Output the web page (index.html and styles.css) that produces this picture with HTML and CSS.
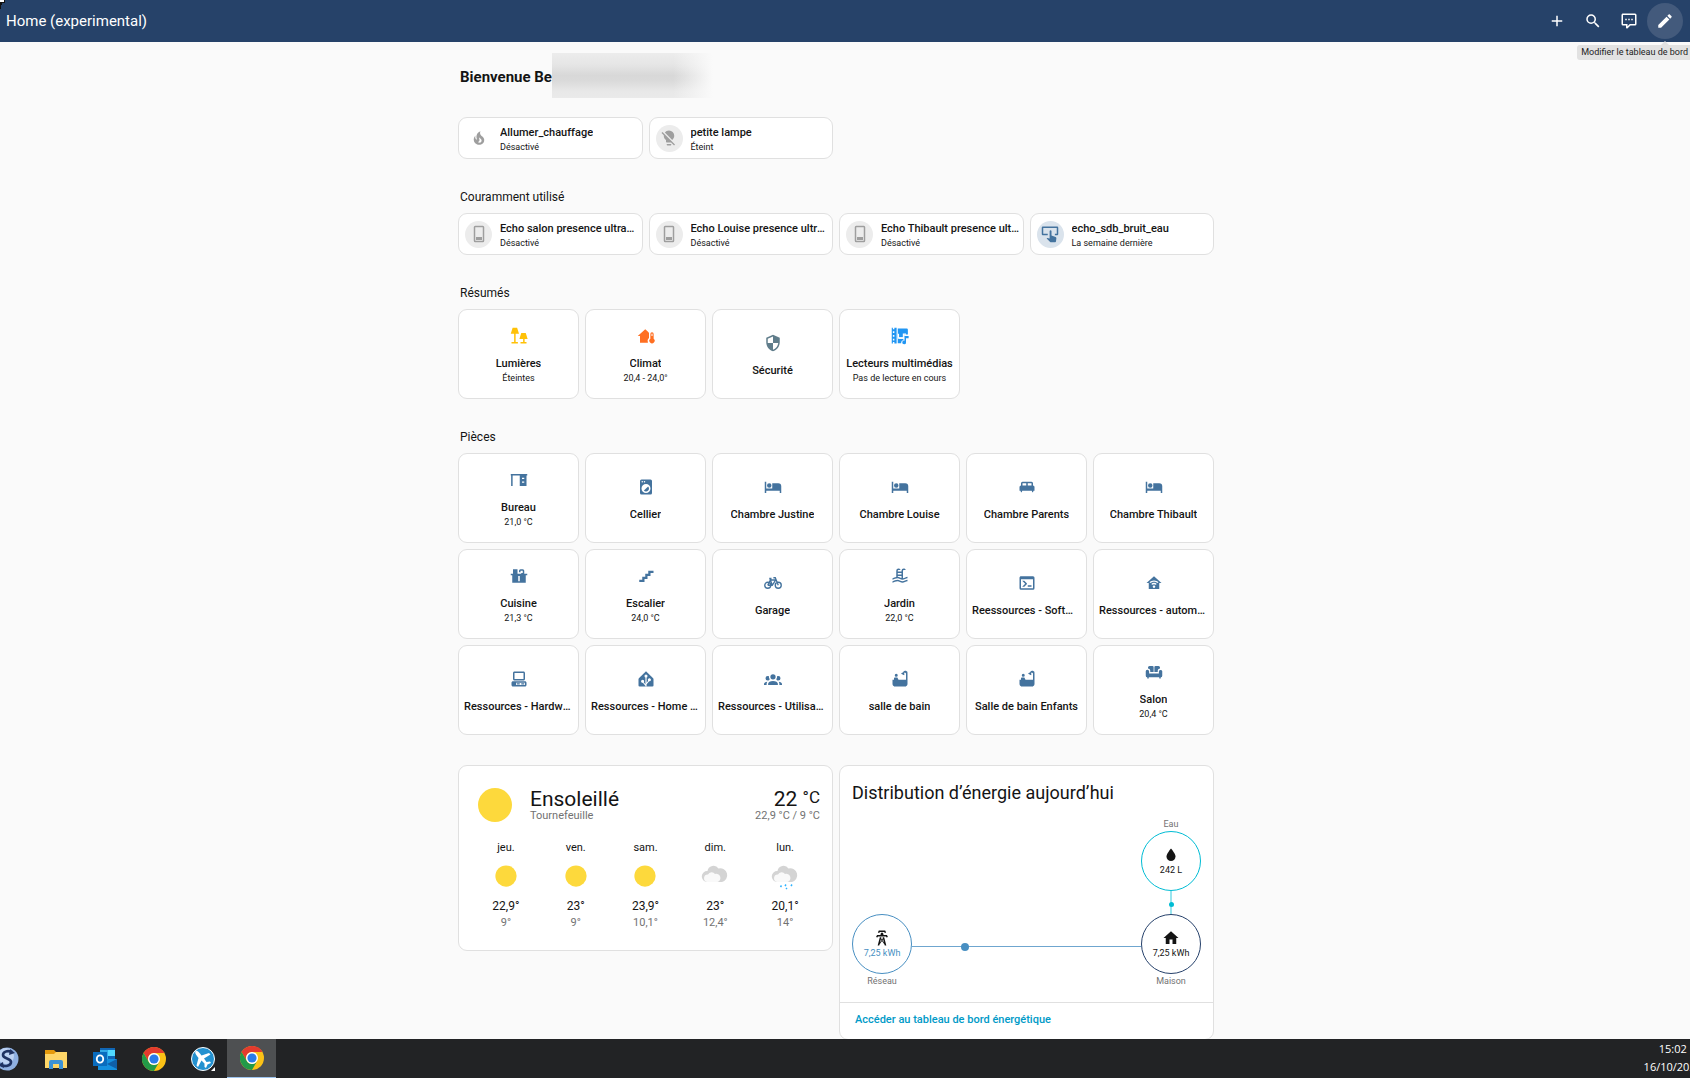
FILE: index.html
```html
<!DOCTYPE html>
<html lang="fr">
<head>
    <meta charset="UTF-8">
    <meta name="viewport" content="width=device-width, initial-scale=1.0">
    <title>Home (experimental)</title>
    <link rel="stylesheet" href="styles.css">
</head>
<body>
    <!-- Icon set -->
    <svg class="sprite" aria-hidden="true">
        <symbol id="plus" viewBox="0 0 24 24"><path d="M19,13H13V19H11V13H5V11H11V5H13V11H19V13Z"/></symbol>
        <symbol id="magnify" viewBox="0 0 24 24"><path d="M9.5,3A6.5,6.5 0 0,1 16,9.5C16,11.11 15.41,12.59 14.44,13.73L14.71,14H15.5L20.5,19L19,20.5L14,15.5V14.71L13.73,14.44C12.59,15.41 11.11,16 9.5,16A6.5,6.5 0 0,1 3,9.5A6.5,6.5 0 0,1 9.5,3M9.5,5C7,5 5,7 5,9.5C5,12 7,14 9.5,14C12,14 14,12 14,9.5C14,7 12,5 9.5,5Z"/></symbol>
        <symbol id="comment" viewBox="0 0 24 24"><path d="M9,22A1,1 0 0,1 8,21V18H4A2,2 0 0,1 2,16V4C2,2.89 2.9,2 4,2H20A2,2 0 0,1 22,4V16A2,2 0 0,1 20,18H13.9L10.2,21.71C10,21.9 9.75,22 9.5,22H9M10,16V19.08L13.08,16H20V4H4V16H10M17,11H15V9H17V11M13,11H11V9H13V11M9,11H7V9H9V11Z"/></symbol>
        <symbol id="pencil" viewBox="0 0 24 24"><path d="M20.71,7.04C21.1,6.65 21.1,6 20.71,5.63L18.37,3.29C18,2.9 17.35,2.9 16.96,3.29L15.12,5.12L18.87,8.87M3,17.25V21H6.75L17.81,9.93L14.06,6.18L3,17.25Z"/></symbol>
        <symbol id="fire" viewBox="0 0 24 24"><path d="M17.66 11.2C17.43 10.9 17.15 10.64 16.89 10.38C16.22 9.78 15.46 9.35 14.82 8.72C13.33 7.26 13 4.85 13.95 3C13 3.23 12.17 3.75 11.46 4.32C8.87 6.4 7.85 10.07 9.07 13.22C9.11 13.32 9.15 13.42 9.15 13.55C9.15 13.77 9 13.97 8.8 14.05C8.57 14.15 8.33 14.09 8.14 13.93C8.08 13.88 8.04 13.83 8 13.76C6.87 12.33 6.69 10.28 7.45 8.64C5.78 10 4.87 12.3 5 14.47C5.06 14.97 5.12 15.47 5.29 15.97C5.43 16.57 5.7 17.17 6 17.7C7.08 19.43 8.95 20.67 10.96 20.92C13.1 21.19 15.39 20.8 17.03 19.32C18.86 17.66 19.5 15 18.56 12.72L18.43 12.46C18.22 12 17.66 11.2 17.66 11.2M14.5 17.5C14.22 17.74 13.76 18 13.4 18.1C12.28 18.5 11.16 17.94 10.5 17.28C11.69 17 12.4 16.12 12.61 15.23C12.78 14.43 12.46 13.77 12.33 13C12.21 12.26 12.23 11.63 12.5 10.94C12.69 11.32 12.89 11.7 13.13 12C13.9 13 15.11 13.44 15.37 14.8C15.41 14.94 15.43 15.08 15.43 15.23C15.46 16.05 15.1 16.95 14.5 17.5Z"/></symbol>
        <symbol id="bulb-off" viewBox="0 0 24 24"><path d="M12,2C9.76,2 7.78,3.05 6.5,4.68L16.31,14.5C17.94,13.21 19,11.24 19,9A7,7 0 0,0 12,2M3.28,4L2,5.27L5.04,8.3C5,8.53 5,8.76 5,9C5,11.38 6.19,13.47 8,14.74V17A1,1 0 0,0 9,18H14.73L18.73,22L20,20.72L3.28,4M9,20V21A1,1 0 0,0 10,22H14A1,1 0 0,0 15,21V20H9Z"/></symbol>
        <symbol id="switch" viewBox="0 0 24 24"><path fill-rule="evenodd" d="M7,1H17A2,2 0 0,1 19,3V21A2,2 0 0,1 17,23H7A2,2 0 0,1 5,21V3A2,2 0 0,1 7,1M7,3V21H17V3M8,16H16V20H8Z"/></symbol>
        <symbol id="tap-button" viewBox="0 0 24 24"><path d="M2,2H22A1.500,1.500 0 0,1 23,3.500V12A1.500,1.500 0 0,1 22,13.500H18.500V11.500H21V4H3V11.500H9V13.500H2A1.500,1.500 0 0,1 1,12V3.500A1.500,1.500 0 0,1 2,2M11.500,8A1.300,1.300 0 0,1 14,8V14L19.500,16C20.200,16.300 20.500,16.800 20.500,17.500L20,21.500C19.900,22.400 19.200,23 18.500,23H13.500C13,23 12.500,22.800 12.200,22.500L7.500,18L8.300,17.200L11.500,18Z"/></symbol>
        <symbol id="lamps" viewBox="0 0 24 24"><path d="M3.500,1H9.500L12,9H7.500V20H10.500V22H2V20H5.500V9H1ZM15,8H21L23.500,16H19.500V20H22V22H14V20H17.500V16H12.500Z"/></symbol>
        <symbol id="home-thermo" viewBox="0 0 24 24"><path d="M11,3L1,12H4V21H14.500V20A5,5 0 0,1 16,14.500V8L15,6.500ZM20,7A2.200,2.200 0 0,0 17.800,9.200V15.500A3.500,3.500 0 1,0 22.200,15.500V9.200A2.200,2.200 0 0,0 20,7M19.300,9.500A0.700,0.700 0 0,1 20.700,9.500V12H19.300Z"/></symbol>
        <symbol id="shield" viewBox="0 0 24 24"><path d="M12,12H19C18.47,16.11 15.72,19.78 12,20.92V12H5V6.3L12,3.19M12,1L3,5V11C3,16.55 6.84,21.73 12,23C17.16,21.73 21,16.55 21,11V5L12,1Z"/></symbol>
        <symbol id="media" viewBox="0 0 24 24"><path fill-rule="evenodd" d="M1,1H2.500V3H4.500V1H7.500V22H4.500V20H2.500V22H1ZM2.500,5.500V8H4.500V5.500ZM2.500,10.500V13H4.500V10.500ZM2.500,15.500V18H4.500V15.500Z"/><path d="M9,2H21A1.500,1.500 0 0,1 22.500,3.500V10H17.500V13.500H9ZM9,13.500H10.500V15.500H16.500V17.500C14.500,17.500 13.500,19 13.500,21.500H9Z"/><path fill="none" stroke="#fff" stroke-width="1.500" d="M10,9V14.800H16.500V9.500H20"/><path d="M18,12H23.500V15H20V20.500A2.500,2.500 0 1,1 18,18.200Z"/></symbol>
        <symbol id="desk" viewBox="0 0 24 24"><path fill-rule="evenodd" d="M1,4H23V6H22V20H13V6H3.500V20H1.500V6H1ZM16,9V10.500H19V9ZM16,14V15.500H19V14Z"/></symbol>
        <symbol id="washer" viewBox="0 0 24 24"><path d="M14.83,11.17C16.39,12.73 16.39,15.26 14.83,16.83C13.27,18.39 10.73,18.39 9.17,16.83L14.83,11.17M6,2H18A2,2 0 0,1 20,4V20A2,2 0 0,1 18,22H6A2,2 0 0,1 4,20V4A2,2 0 0,1 6,2M7,4A1,1 0 0,0 6,5A1,1 0 0,0 7,6A1,1 0 0,0 8,5A1,1 0 0,0 7,4M10,4A1,1 0 0,0 9,5A1,1 0 0,0 10,6A1,1 0 0,0 11,5A1,1 0 0,0 10,4M12,8A6,6 0 0,0 6,14A6,6 0 0,0 12,20A6,6 0 0,0 18,14A6,6 0 0,0 12,8Z"/></symbol>
        <symbol id="bed" viewBox="0 0 24 24"><path d="M19,7H11V14H3V5H1V20H3V17H21V20H23V11A4,4 0 0,0 19,7M7,13A3,3 0 0,0 10,10A3,3 0 0,0 7,7A3,3 0 0,0 4,10A3,3 0 0,0 7,13Z"/></symbol>
        <symbol id="bed-double" viewBox="0 0 24 24"><path d="M20,10V7A2,2 0 0,0 18,5H6A2,2 0 0,0 4,7V10A2,2 0 0,0 2,12V17H3.33L4,19H5L5.67,17H18.33L19,19H20L20.67,17H22V12A2,2 0 0,0 20,10M11,10H6V7H11M18,10H13V7H18Z"/></symbol>
        <symbol id="sink" viewBox="0 0 24 24"><path fill-rule="evenodd" d="M4,3H10V9H15V8H17V5H14V7H12V5A2,2 0 0,1 14,3H17A2,2 0 0,1 19,5V9H23V11H21V21H3V11H1V9H4ZM11,12V19H13V12Z"/></symbol>
        <symbol id="stairs" viewBox="0 0 24 24"><path d="M15,5V9H11V13H7V17H3V20H10V16H14V12H18V8H22V5H15Z"/></symbol>
        <symbol id="bicycle" viewBox="0 0 24 24"><path fill="none" stroke="currentColor" stroke-width="1.800" d="M5,11A4,4 0 1,0 5,19A4,4 0 1,0 5,11M19,11A4,4 0 1,0 19,19A4,4 0 1,0 19,11M5,15H11L15.500,8H8.500L11,15M5,15L9,7M7,6H10M19,15L15,5H12.500"/></symbol>
        <symbol id="pool" viewBox="0 0 24 24"><path d="M2,15C3.67,14.25 5.33,13.5 7,13.25V5A3,3 0 0,1 10,2C11.31,2 12.42,2.83 12.83,4H10A1,1 0 0,0 9,5V6H14V5A3,3 0 0,1 17,2C18.31,2 19.42,2.83 19.83,4H17A1,1 0 0,0 16,5V14.94C18,14.62 20,13 22,13V15C19.78,15 17.56,17 15.33,17C13.11,17 10.89,15 8.67,15C6.44,15 4.22,16 2,17V15M14,8H9V10H14V8M14,12H9V13C10.67,13.16 12.33,14.31 14,14.79V12M2,19C4.22,18 6.44,17 8.67,17C10.89,17 13.11,19 15.33,19C17.56,19 19.78,17 22,17V19C19.78,19 17.56,21 15.33,21C13.11,21 10.89,19 8.67,19C6.44,19 4.22,20 2,21V19Z"/></symbol>
        <symbol id="console" viewBox="0 0 24 24"><path d="M20,19V7H4V19H20M20,3A2,2 0 0,1 22,5V19A2,2 0 0,1 20,21H4A2,2 0 0,1 2,19V5C2,3.89 2.9,3 4,3H20M13,17V15H18V17H13M9.58,13L5.57,9H8.4L11.7,12.3C12.09,12.69 12.09,13.33 11.7,13.72L8.42,17H5.59L9.58,13Z"/></symbol>
        <symbol id="home-wifi" viewBox="0 0 24 24"><path d="M12,3L2,12H5V20H19V12H22L12,3M12,8.5C14.34,8.5 16.46,9.43 18,10.94L16.8,12.12C15.58,10.91 13.88,10.17 12,10.17C10.12,10.17 8.42,10.91 7.2,12.12L6,10.94C7.54,9.43 9.66,8.5 12,8.5M12,11.83C13.4,11.83 14.67,12.39 15.6,13.3L14.4,14.47C13.79,13.87 12.94,13.5 12,13.5C11.06,13.5 10.21,13.87 9.6,14.47L8.4,13.3C9.33,12.39 10.6,11.83 12,11.83M12,15.17C12.94,15.17 13.7,15.91 13.7,16.83C13.7,17.75 12.94,18.5 12,18.5C11.06,18.5 10.3,17.75 10.3,16.83C10.3,15.91 11.06,15.17 12,15.17Z"/></symbol>
        <symbol id="desktop" viewBox="0 0 24 24"><path fill-rule="evenodd" d="M6,2C4.89,2 4,2.89 4,4V12C4,13.11 4.89,14 6,14H18C19.11,14 20,13.11 20,12V4C20,2.89 19.11,2 18,2H6M6,4H18V12H6V4M4,15C2.89,15 2,15.89 2,17V20C2,21.11 2.89,22 4,22H20C21.11,22 22,21.11 22,20V17C22,15.89 21.11,15 20,15H4M8,17H20V20H8V17M9,17.75V19.25H13V17.75H9M15,17.75V19.25H19V17.75H15Z"/></symbol>
        <symbol id="home-tree" viewBox="0 0 24 24"><path d="M12,1.500L2.500,11Q2,11.600 2,12.500V20.500Q2,22 3.500,22H20.500Q22,22 22,20.500V12.500Q22,11.600 21.500,11Z"/><g fill="#fff" stroke="#fff" stroke-width="1.500"><path fill="none" d="M12,22V8M12,21L7,15M12,19L17,13"/><circle cx="12" cy="8" r="1.300"/><circle cx="7.500" cy="15" r="1.300"/><circle cx="16.500" cy="13" r="1.300"/></g></symbol>
        <symbol id="group" viewBox="0 0 24 24"><path d="M12,5.5A3.5,3.5 0 0,1 15.5,9A3.5,3.5 0 0,1 12,12.5A3.5,3.5 0 0,1 8.5,9A3.5,3.5 0 0,1 12,5.5M5,8C5.56,8 6.08,8.15 6.53,8.42C6.38,9.85 6.8,11.27 7.66,12.38C7.16,13.34 6.16,14 5,14A3,3 0 0,1 2,11A3,3 0 0,1 5,8M19,8A3,3 0 0,1 22,11A3,3 0 0,1 19,14C17.84,14 16.84,13.34 16.34,12.38C17.2,11.27 17.62,9.85 17.47,8.42C17.92,8.15 18.44,8 19,8M5.5,18.25C5.5,16.18 8.41,14.5 12,14.5C15.59,14.5 18.5,16.18 18.5,18.25V20H5.5V18.25M0,20V18.5C0,17.11 1.89,15.94 4.45,15.6C3.86,16.28 3.5,17.22 3.5,18.25V20H0M24,20H20.5V18.25C20.5,17.22 20.14,16.28 19.55,15.6C22.11,15.94 24,17.11 24,18.5V20Z"/></symbol>
        <symbol id="bath" viewBox="0 0 24 24"><path d="M7,5A2,2 0 1,1 7,9A2,2 0 1,1 7,5M5,10H8.500L10,13H20V5A1,1 0 0,0 17.500,4.500C18,5 18,6 17.500,7L13.500,5C14.500,3.500 15.500,3.300 16,3.300A3,3 0 0,1 22,5V19A3,3 0 0,1 20,21.500V22H18.500H5.500H4V21.500A3,3 0 0,1 2,19V13H4V11A1,1 0 0,1 5,10Z"/></symbol>
        <symbol id="sofa" viewBox="0 0 24 24"><path d="M6,4H10A1.500,1.500 0 0,1 11.500,5.500V12H7V10A3,3 0 0,0 4,7.500V6A2,2 0 0,1 6,4M14,4H18A2,2 0 0,1 20,6V7.500A3,3 0 0,0 17,10V12H12.500V5.500A1.500,1.500 0 0,1 14,4M3,9A2.300,2.300 0 0,1 5.500,11V14H18.500V11A2.300,2.300 0 0,1 23,11V17A2,2 0 0,1 21,19V20.500H19V19H5V20.500H3V19A2,2 0 0,1 1,17V11A2,2 0 0,1 3,9Z"/></symbol>
        <symbol id="water" viewBox="0 0 24 24"><path d="M12,20A6,6 0 0,1 6,14C6,10 12,3.25 12,3.25C12,3.25 18,10 18,14A6,6 0 0,1 12,20Z"/></symbol>
        <symbol id="home" viewBox="0 0 24 24"><path d="M10,20V14H14V20H19V12H22L12,3L2,12H5V20H10Z"/></symbol>
        <symbol id="tower" viewBox="0 0 24 24"><path d="M8.28,5.45L6.5,4.55L7.76,2H16.23L17.5,4.55L15.72,5.44L15,4H9L8.28,5.45M18.62,8H14.09L13.3,5H10.7L9.91,8H5.38L4.1,10.55L5.89,11.44L6.62,10H17.38L18.1,11.45L19.89,10.56L18.62,8M17.77,22H15.7L15.46,21.1L12,15.9L8.53,21.1L8.3,22H6.23L9.12,11H11.19L10.83,12.35L12,14.1L13.16,12.35L12.81,11H14.88L17.77,22M11.4,15L10.5,13.65L9.32,18.13L11.4,15M14.68,18.12L13.5,13.64L12.6,15L14.68,18.12Z"/></symbol>
        <symbol id="sun" viewBox="0 0 48 48"><circle cx="24" cy="24" r="17" fill="#fdd93c"/></symbol>
        <symbol id="cloud" viewBox="0 0 30 30"><path fill="#d4d4d4" d="M7,21A5.500,5.500 0 0,1 7.500,10A6,6 0 0,1 18.500,7.500A6.500,6.500 0 0,1 22,21Z"/><path fill="#f9f9f9" d="M7,21A3.800,3.800 0 0,1 8,13.500A4,4 0 0,1 15,13A4,4 0 0,1 17.500,21Z"/></symbol>
        <symbol id="rain" viewBox="0 0 30 30"><use href="#cloud"/><path stroke="#30b3ff" stroke-width="1.500" d="M10.500,26L11.500,24.500M15,25L16,23.500M16,28L17,27M21,25L22,23.500"/></symbol>
        <symbol id="chrome" viewBox="0 0 24 24"><circle cx="12" cy="12" r="12" fill="#fbc116"/><path fill="#e33b2e" d="M1.600,6A12,12 0 0,1 22.400,6H12A6,6 0 0,0 6.800,15Z"/><path fill="#229a48" d="M1.600,6L6.800,15A6,6 0 0,0 17.200,15L12,24A12,12 0 0,1 1.600,6Z"/><circle cx="12" cy="12" r="6" fill="#fff"/><circle cx="12" cy="12" r="4.600" fill="#2a7be9"/></symbol>
    </svg>

    <header class="toolbar">
        <h1 class="toolbar-title">Home (experimental)</h1>
        <nav class="toolbar-actions">
            <button class="icon-button" aria-label="Ajouter"><svg><use href="#plus"/></svg></button>
            <button class="icon-button" aria-label="Rechercher"><svg><use href="#magnify"/></svg></button>
            <button class="icon-button" aria-label="Assistant"><svg><use href="#comment"/></svg></button>
            <button class="icon-button active" aria-describedby="edit-tip" aria-label="Modifier"><svg><use href="#pencil"/></svg></button>
        </nav>
        <div class="tooltip" id="edit-tip" role="tooltip">Modifier le tableau de bord</div>
    </header>

    <main class="view">
        <div class="sections">
            <section class="section">
                <h2 class="welcome">Bienvenue Be<span class="masked"></span></h2>
                <div class="tiles">
                    <button class="tile">
                        <span class="badge plain"><svg><use href="#fire"/></svg></span>
                        <span class="info"><span class="name">Allumer_chauffage</span><span class="state">Désactivé</span></span>
                    </button>
                    <button class="tile">
                        <span class="badge"><svg><use href="#bulb-off"/></svg></span>
                        <span class="info"><span class="name">petite lampe</span><span class="state">Éteint</span></span>
                    </button>
                </div>
            </section>

            <section class="section">
                <h2 class="heading">Couramment utilisé</h2>
                <div class="tiles">
                    <button class="tile">
                        <span class="badge"><svg><use href="#switch"/></svg></span>
                        <span class="info"><span class="name">Echo salon presence ultrason</span><span class="state">Désactivé</span></span>
                    </button>
                    <button class="tile">
                        <span class="badge"><svg><use href="#switch"/></svg></span>
                        <span class="info"><span class="name">Echo Louise presence ultrason</span><span class="state">Désactivé</span></span>
                    </button>
                    <button class="tile">
                        <span class="badge"><svg><use href="#switch"/></svg></span>
                        <span class="info"><span class="name">Echo Thibault presence ultrason</span><span class="state">Désactivé</span></span>
                    </button>
                    <button class="tile">
                        <span class="badge on"><svg><use href="#tap-button"/></svg></span>
                        <span class="info"><span class="name">echo_sdb_bruit_eau</span><span class="state">La semaine dernière</span></span>
                    </button>
                </div>
            </section>

            <section class="section">
                <h2 class="heading">Résumés</h2>
                <div class="areas">
                    <button class="area light"><svg><use href="#lamps"/></svg><span class="name">Lumières</span><span class="state">Éteintes</span></button>
                    <button class="area climate"><svg><use href="#home-thermo"/></svg><span class="name">Climat</span><span class="state">20,4 - 24,0°</span></button>
                    <button class="area security"><svg><use href="#shield"/></svg><span class="name">Sécurité</span></button>
                    <button class="area media"><svg><use href="#media"/></svg><span class="name">Lecteurs multimédias</span><span class="state">Pas de lecture en cours</span></button>
                </div>
            </section>

            <section class="section">
                <h2 class="heading">Pièces</h2>
                <div class="areas">
                    <button class="area"><svg><use href="#desk"/></svg><span class="name">Bureau</span><span class="state">21,0 °C</span></button>
                    <button class="area"><svg><use href="#washer"/></svg><span class="name">Cellier</span></button>
                    <button class="area"><svg><use href="#bed"/></svg><span class="name">Chambre Justine</span></button>
                    <button class="area"><svg><use href="#bed"/></svg><span class="name">Chambre Louise</span></button>
                    <button class="area"><svg><use href="#bed-double"/></svg><span class="name">Chambre Parents</span></button>
                    <button class="area"><svg><use href="#bed"/></svg><span class="name">Chambre Thibault</span></button>
                    <button class="area"><svg><use href="#sink"/></svg><span class="name">Cuisine</span><span class="state">21,3 °C</span></button>
                    <button class="area"><svg><use href="#stairs"/></svg><span class="name">Escalier</span><span class="state">24,0 °C</span></button>
                    <button class="area"><svg><use href="#bicycle"/></svg><span class="name">Garage</span></button>
                    <button class="area"><svg><use href="#pool"/></svg><span class="name">Jardin</span><span class="state">22,0 °C</span></button>
                    <button class="area"><svg><use href="#console"/></svg><span class="name">Reessources - Software</span></button>
                    <button class="area"><svg><use href="#home-wifi"/></svg><span class="name">Ressources - automatisation</span></button>
                    <button class="area"><svg><use href="#desktop"/></svg><span class="name">Ressources - Hardware</span></button>
                    <button class="area"><svg><use href="#home-tree"/></svg><span class="name">Ressources - Home Assistant</span></button>
                    <button class="area"><svg><use href="#group"/></svg><span class="name">Ressources - Utilisateurs</span></button>
                    <button class="area"><svg><use href="#bath"/></svg><span class="name">salle de bain</span></button>
                    <button class="area"><svg><use href="#bath"/></svg><span class="name">Salle de bain Enfants</span></button>
                    <button class="area"><svg><use href="#sofa"/></svg><span class="name">Salon</span><span class="state">20,4 °C</span></button>
                </div>
            </section>

            <section class="section cards">
                <article class="card weather">
                    <div class="current">
                        <svg class="current-icon"><use href="#sun"/></svg>
                        <div class="current-place">
                            <div class="current-main">Ensoleillé</div>
                            <div class="current-sub">Tournefeuille</div>
                        </div>
                        <div class="current-temp">
                            <div class="current-main">22 <span class="unit">°C</span></div>
                            <div class="current-sub">22,9 °C / 9 °C</div>
                        </div>
                    </div>
                    <div class="forecast">
                        <div class="day"><span>jeu.</span><svg><use href="#sun"/></svg><span class="high">22,9°</span><span class="low">9°</span></div>
                        <div class="day"><span>ven.</span><svg><use href="#sun"/></svg><span class="high">23°</span><span class="low">9°</span></div>
                        <div class="day"><span>sam.</span><svg><use href="#sun"/></svg><span class="high">23,9°</span><span class="low">10,1°</span></div>
                        <div class="day"><span>dim.</span><svg><use href="#cloud"/></svg><span class="high">23°</span><span class="low">12,4°</span></div>
                        <div class="day"><span>lun.</span><svg><use href="#rain"/></svg><span class="high">20,1°</span><span class="low">14°</span></div>
                    </div>
                </article>

                <article class="card energy">
                    <h2 class="energy-title">Distribution d’énergie aujourd’hui</h2>
                    <div class="flow">
                        <div class="node water">
                            <span class="node-label">Eau</span>
                            <div class="circle"><svg><use href="#water"/></svg>242 L</div>
                            <div class="pipe"></div>
                        </div>
                        <div class="flow-row">
                            <div class="node grid">
                                <div class="circle"><svg><use href="#tower"/></svg><span>7,25 kWh</span></div>
                                <span class="node-label">Réseau</span>
                            </div>
                            <div class="wire"></div>
                            <div class="node house">
                                <div class="circle"><svg><use href="#home"/></svg>7,25 kWh</div>
                                <span class="node-label">Maison</span>
                            </div>
                        </div>
                    </div>
                    <div class="card-actions"><a href="#energy">Accéder au tableau de bord énergétique</a></div>
                </article>
            </section>
        </div>
    </main>

    <footer class="taskbar">
        <button class="task first" aria-label="Synchronisation">
            <svg viewBox="0 0 24 24"><circle cx="12" cy="12" r="11.500" fill="#8fb0e2"/><circle cx="11" cy="9" r="8" fill="#bdd2f3"/><path fill="none" stroke="#1f3263" stroke-width="2.600" d="M17,5C12,3 8,5 8,8C8,12 16,11 16,15C16,19 10,20 6,18"/><path fill="#1f3263" d="M15,2L20,6L14,8ZM8,15L3,18L9,21Z"/></svg>
        </button>
        <button class="task" aria-label="Explorateur de fichiers">
            <svg viewBox="0 0 24 24"><path fill="#e59a0c" d="M1,3H10L12,5V8H1Z"/><path fill="#fed668" d="M1,7H10L12,5H23V21H1Z"/><path fill="#3c92d6" d="M5,22V15Q5,13 7,13H17Q19,13 19,15V22H15V17H9V22Z"/></svg>
        </button>
        <button class="task" aria-label="Outlook">
            <svg viewBox="0 0 24 24"><path fill="#1066b5" d="M7,1H22V13H7Z"/><path fill="#32a9e7" d="M7,3H15V12H7Z"/><path fill="#50d9ff" d="M15,3H22V9H15Z"/><path fill="#1490df" d="M5,12H24V23H5Z"/><path fill="#0f5fa8" d="M24,12V22L14,17Z"/><path fill="#0a6cbd" d="M0,5H14V19H0Z"/><ellipse cx="7" cy="12" rx="3.200" ry="3.600" fill="none" stroke="#fff" stroke-width="1.900"/></svg>
        </button>
        <button class="task" aria-label="Chrome"><svg><use href="#chrome"/></svg></button>
        <button class="task" aria-label="Avion">
            <svg viewBox="0 0 24 24"><circle cx="12" cy="12" r="11.500" fill="#2391d0" stroke="#fff"/><path fill="#fff" d="M4.500,4C5.500,3 7.500,4.500 9,6.500L10.500,8.500L18,6L19.500,7.500L13,11.500L15.500,15L19,14.500L20,16L16.500,17.500L15,21L13.500,20L13.500,16.500L10.500,13.500L7,20L5.500,18.500L7.500,11L6,9C4.500,7 3.700,5 4.500,4ZM24,20V24H20Z"/></svg>
        </button>
        <button class="task current-task" aria-label="Chrome, fenêtre active"><svg><use href="#chrome"/></svg></button>
        <div class="clock"><span>15:02</span><span>16/10/2025</span></div>
    </footer>
    <svg class="pointer" viewBox="0 0 6 10" aria-hidden="true"><path fill="#111" d="M0,0H5V3H2V5H1V9H0Z"/><path fill="#fff" d="M0,0H4V2H0Z"/></svg>
</body>
</html>
```
FILE: styles.css
```css
* {
    box-sizing: border-box;
}

body {
    margin: 0;
    height: 100vh;
    display: flex;
    flex-direction: column;
    overflow: hidden;
    font-family: Roboto, "Noto Sans", sans-serif;
    font-size: 11px;
    color: #141414;
    background-color: #fafafa;
}

h1, h2 {
    margin: 0;
    font-weight: 400;
}

button {
    font-family: inherit;
    font-size: inherit;
    color: inherit;
    margin: 0;
    padding: 0;
    border: none;
    background: none;
    cursor: pointer;
}

svg {
    display: block;
    width: 18px;
    height: 18px;
    fill: currentColor;
    flex: none;
}

.sprite {
    position: absolute;
    width: 0;
    height: 0;
}

/* Top bar */
.toolbar {
    position: relative;
    flex: none;
    height: 42px;
    padding: 0 7px 0 6px;
    display: flex;
    align-items: center;
    justify-content: space-between;
    color: #fff;
    background-color: #264269;
}

.toolbar-title {
    font-size: 15px;
}

.toolbar-actions {
    display: flex;
}

.icon-button {
    width: 36px;
    height: 36px;
    display: flex;
    align-items: center;
    justify-content: center;
    border-radius: 50%;
}

.icon-button.active {
    background-color: #435a7c;
}

.tooltip {
    position: absolute;
    top: 45px;
    right: -2px;
    padding: 0 4px;
    font-size: 9px;
    line-height: 15px;
    color: #222;
    background-color: #e2e2e2;
    border-radius: 3px;
}

.tooltip::before {
    content: "";
    position: absolute;
    top: -4px;
    right: 22px;
    border: 5px solid transparent;
    border-top: none;
    border-bottom-color: #e2e2e2;
}

.pointer {
    position: absolute;
    top: 0;
    left: 0;
    width: 6px;
    height: 10px;
}

/* Dashboard */
.view {
    flex: 1;
    min-height: 0;
    overflow: hidden;
    padding: 11px 18px 0 0;
}

.sections {
    max-width: 756px;
    margin: 0 auto;
    display: flex;
    flex-direction: column;
    gap: 30px;
}

.welcome {
    display: flex;
    height: 45px;
    margin-bottom: 19px;
    padding-left: 2px;
    font-size: 15px;
    font-weight: 700;
    line-height: 48px;
}

.masked {
    width: 164px;
    height: 45px;
    background:
        linear-gradient(to right, transparent 74%, #fafafa 98%),
        linear-gradient(#ececec, #e6e6e6 25%, #d8d8d8 50%, #dadada 62%, #e8e8e8 85%, #eaeaea);
}

.heading {
    padding-left: 2px;
    margin-bottom: 8px;
    font-size: 12px;
    line-height: 16px;
}

.tiles {
    display: grid;
    grid-template-columns: repeat(4, minmax(0, 1fr));
    gap: 6px;
}

.areas {
    display: grid;
    grid-template-columns: repeat(6, minmax(0, 1fr));
    gap: 6px;
}

.tile, .area, .card {
    background-color: #fff;
    border: 1px solid #e0e0e0;
    border-radius: 9px;
}

.tile {
    height: 42px;
    padding: 0 3px 0 6px;
    display: flex;
    align-items: center;
    gap: 8px;
    text-align: left;
}

.badge {
    flex: none;
    width: 27px;
    height: 27px;
    display: flex;
    align-items: center;
    justify-content: center;
    border-radius: 50%;
    color: #9e9e9e;
    background-color: #ececec;
}

.badge.plain {
    background: none;
}

.badge.on {
    color: #44739e;
    background-color: #dae3ec;
}

.info {
    min-width: 0;
    display: flex;
    flex-direction: column;
    padding-top: 2px;
}

.name {
    max-width: 100%;
    overflow: hidden;
    text-overflow: ellipsis;
    white-space: nowrap;
    font-weight: 500;
    line-height: 15px;
}

.state {
    font-size: 9px;
    line-height: 14px;
    white-space: nowrap;
}

.area {
    height: 90px;
    padding: 0 5px;
    display: flex;
    flex-direction: column;
    align-items: center;
    justify-content: center;
}

.area svg {
    margin: 4px 0 11px;
    color: #44739e;
}

.area.light svg { color: #ffc107; }
.area.climate svg { color: #ff6f22; }
.area.security svg { color: #607d8b; }
.area.media svg { color: #2196f3; }

/* Cards */
.cards {
    display: grid;
    grid-template-columns: repeat(2, minmax(0, 1fr));
    gap: 6px;
    align-items: start;
}

.weather {
    padding: 15px 12px 18px;
}

.current {
    display: flex;
    align-items: center;
}

.current-icon {
    width: 48px;
    height: 48px;
    margin-right: 11px;
}

.current-temp {
    margin-left: auto;
    text-align: right;
}

.current-main {
    font-size: 21px;
    line-height: 22px;
}

.unit {
    font-size: 17px;
    line-height: 16px;
    vertical-align: 3px;
}

.current-sub {
    line-height: 12px;
    color: #727272;
}

.forecast {
    display: flex;
    margin-top: 12px;
}

.day {
    flex: 1;
    display: flex;
    flex-direction: column;
    align-items: center;
    line-height: 14px;
}

.day svg {
    width: 30px;
    height: 30px;
    margin: 6px 0 7px;
}

.high {
    font-size: 12px;
    line-height: 16px;
}

.low {
    line-height: 18px;
    color: #727272;
}

.energy-title {
    padding: 16px 12px 0;
    font-size: 18px;
    line-height: 22px;
}

.flow {
    padding: 13px 12px 14px;
    display: flex;
    flex-direction: column;
}

.flow-row {
    display: flex;
}

.node {
    width: 60px;
    display: flex;
    flex-direction: column;
    align-items: center;
}

.node.water {
    align-self: flex-end;
}

.node-label {
    font-size: 9px;
    line-height: 14px;
    color: #727272;
}

.circle {
    width: 60px;
    height: 60px;
    display: flex;
    flex-direction: column;
    align-items: center;
    justify-content: center;
    border: 1px solid #26416b;
    border-radius: 50%;
    font-size: 9px;
    line-height: 12px;
}

.node.water .circle {
    border-color: #00bcd4;
}

.node.grid .circle {
    border-color: #488fc2;
}

.node.grid span:not(.node-label) {
    color: #488fc2;
}

.pipe {
    width: 2px;
    height: 23px;
    display: flex;
    align-items: center;
    justify-content: center;
    background-color: #99e4ee;
}

.pipe::before {
    content: "";
    flex: none;
    width: 5px;
    height: 5px;
    margin-top: 4px;
    border-radius: 50%;
    background-color: #00bcd4;
}

.wire {
    flex: 1;
    height: 1px;
    margin-top: 32px;
    display: flex;
    align-items: center;
    padding-left: 14%;
    background-color: #6fa6cf;
}

.wire::before {
    content: "";
    flex: none;
    width: 8px;
    height: 8px;
    border-radius: 50%;
    background-color: #488fc2;
}

.card-actions {
    padding: 0 15px 3px;
    border-top: 1px solid #e0e0e0;
    line-height: 33px;
}

.card-actions a {
    font-weight: 500;
    color: #009ac7;
    text-decoration: none;
}

/* Desktop taskbar */
.taskbar {
    flex: none;
    height: 39px;
    display: flex;
    overflow: hidden;
    color: #fff;
    background-color: #222325;
}

.task {
    flex: none;
    width: 49px;
    display: flex;
    align-items: center;
    justify-content: center;
}

.task.first {
    width: 31px;
    padding-right: 17px;
}

.task svg {
    width: 24px;
    height: 24px;
}

.current-task {
    background-color: #4e5052;
    border-bottom: 1px solid #9cc3ee;
}

.clock {
    margin: 1px -12px 0 auto;
    display: flex;
    flex-direction: column;
    align-items: center;
    font-family: "Open Sans", "Noto Sans", sans-serif;
    font-size: 11px;
    line-height: 18px;
}
```
